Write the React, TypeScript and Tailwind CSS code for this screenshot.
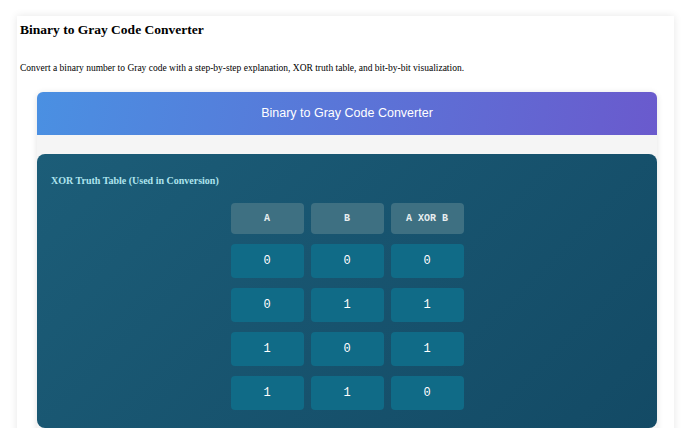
import React from 'react';

const serif = { fontFamily: '"Liberation Serif", "Times New Roman", serif' };
const sans = { fontFamily: '"Liberation Sans", Arial, sans-serif' };
const mono = { fontFamily: '"Liberation Mono", "Courier New", monospace' };

const rows = [
  ['0', '0', '0'],
  ['0', '1', '1'],
  ['1', '0', '1'],
  ['1', '1', '0'],
];

function TruthTable() {
  return (
    <div className="rounded-[8px] bg-linear-[135deg] from-[#1c5d78] to-[#134a65] px-[14px] pt-[19px] pb-[18px]">
      <h3 className="text-[10px] leading-[16px] font-bold text-[#aee4ee]" style={serif}>
        XOR Truth Table (Used in Conversion)
      </h3>
      <div className="mt-[14px] flex justify-center">
        <div className="grid grid-cols-[73px_73px_73px] gap-x-[7px] gap-y-[10px]" style={mono}>
          {['A', 'B', 'A XOR B'].map((h) => (
            <div
              key={h}
              className="flex h-[31px] items-center justify-center rounded-[4px] bg-[#3e7082] text-[10px] font-bold text-[#e8eef0]"
            >
              {h}
            </div>
          ))}
          {rows.map((r, i) =>
            r.map((v, j) => (
              <div
                key={i + '-' + j}
                className="flex h-[34px] items-center justify-center rounded-[4px] bg-[#106b87] text-[12px] text-white"
              >
                {v}
              </div>
            ))
          )}
        </div>
      </div>
    </div>
  );
}

export default function App() {
  return (
    <div className="min-h-screen bg-white pt-[16px] pl-[17px] pb-[40px]">
      <div className="w-[657px] bg-white pt-[4px] pb-[20px] pl-[3px] shadow-[0_0_8px_rgba(0,0,0,0.1)]">
        <h1 className="text-[13.5px] leading-[20px] font-bold text-black" style={serif}>
          Binary to Gray Code Converter
        </h1>
        <p className="mt-[20px] text-[9.5px] leading-[16px] text-black" style={serif}>
          Convert a binary number to Gray code with a step-by-step explanation, XOR truth table, and bit-by-bit visualization.
        </p>

        <div className="mt-[16px] ml-[17px] w-[620px] overflow-hidden rounded-[6px] bg-[#f5f5f5] pb-[20px] shadow-[0_1px_6px_rgba(0,0,0,0.12)]">
          <div className="flex h-[43px] items-center justify-center bg-linear-[100deg] from-[#4a90e2] to-[#6a5acd]">
            <span className="text-[12.5px] text-white" style={sans}>
              Binary to Gray Code Converter
            </span>
          </div>

          <div className="pt-[19px]">
            <TruthTable />
          </div>
        </div>
      </div>
    </div>
  );
}
